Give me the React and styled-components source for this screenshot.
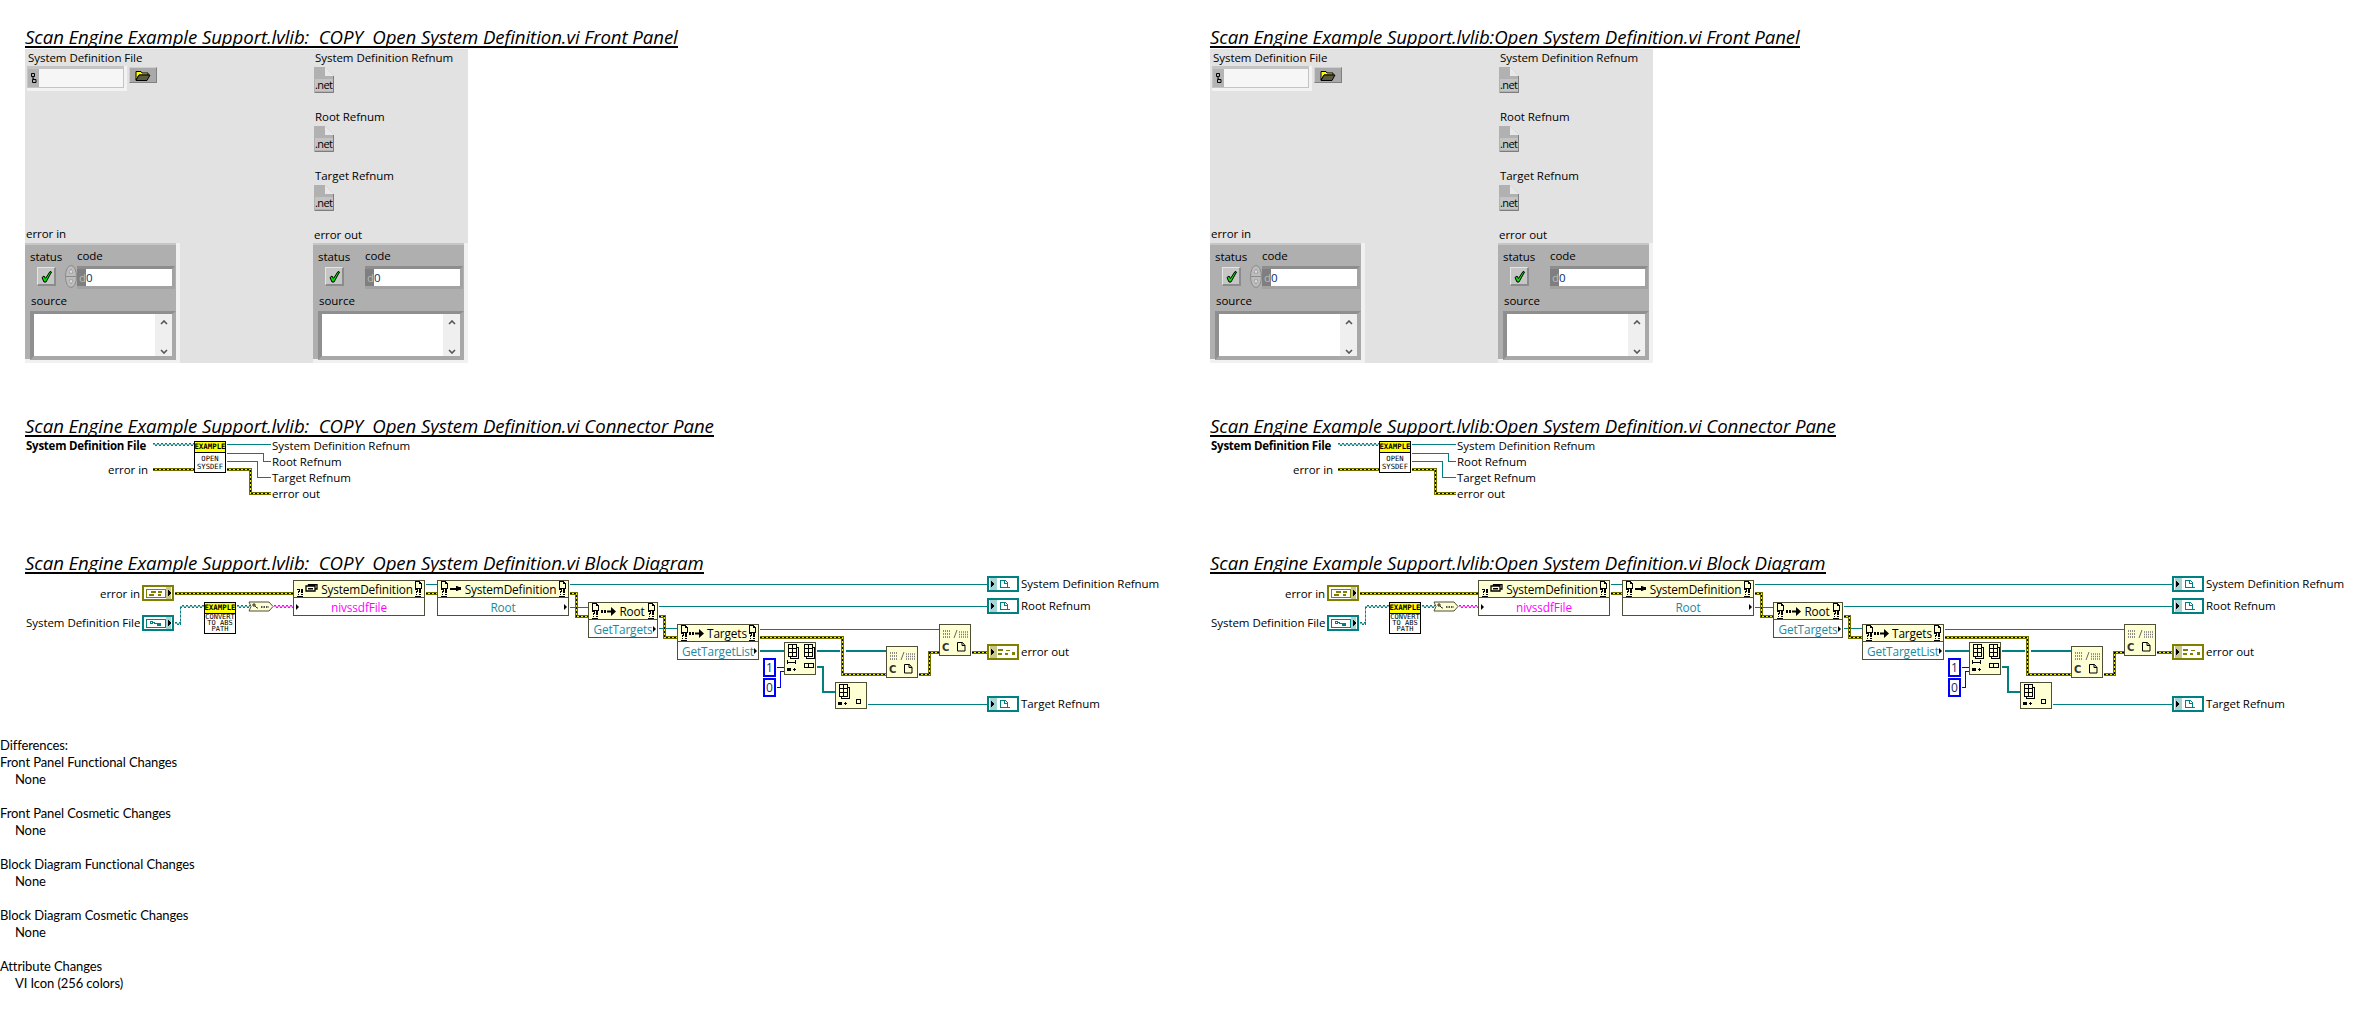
import React from "react";
import styled, { createGlobalStyle, css } from "styled-components";

const Global = createGlobalStyle`
  html, body { margin: 0; padding: 0; background: #fff; }
  body { font-family: "Open Sans", "Noto Sans", sans-serif; color: #000; }
`;

const UI_FONT = `"Open Sans", "Noto Sans", sans-serif`;
const MONO_FONT = `"DejaVu Sans Mono", "Liberation Mono", monospace`;

const placed = css`
  position: absolute;
  left: ${(p) => p.$x ?? 0}px;
  top: ${(p) => p.$y ?? 0}px;
`;

const Page = styled.div`
  width: 2370px;
  height: 1026px;
  overflow: hidden;
`;
const Columns = styled.div`
  display: flex;
  align-items: flex-start;
`;
const Column = styled.section`
  width: 1185px;
  flex: none;
  box-sizing: border-box;
  padding: 28px 0 0 25px;
`;
const Title = styled.h2`
  display: table;
  margin: ${(p) => p.$top ?? 0}px 0 0;
  font: italic 400 18.67px/18px ${UI_FONT};
  letter-spacing: -0.09px;
  white-space: pre;
  border-bottom: 2px solid #000;
`;
const Canvas = styled.div`
  position: relative;
  width: ${(p) => p.$w}px;
  height: ${(p) => p.$h}px;
`;
const Label = styled.span`
  position: absolute;
  top: ${(p) => p.$y}px;
  ${(p) => (p.$r != null ? `right: calc(100% - ${p.$r}px);` : `left: ${p.$x}px;`)}
  font: ${(p) => (p.$bold ? 700 : 400)} 11.5px/16px ${UI_FONT};
  letter-spacing: ${(p) => (p.$bold ? -0.24 : -0.05)}px;
  white-space: nowrap;
`;
const Wires = styled.svg`
  position: absolute;
  left: 0;
  top: 0;
  width: 100%;
  height: 100%;
  pointer-events: none;
`;

/* Front panel */
const Panel = styled.div`
  margin-top: 1px;
  width: 443px;
  height: 314px;
  display: grid;
  grid-template-columns: 155px 155px;
  justify-content: space-between;
  background: #e2e2e2;
`;
const PanelColumn = styled.div`
  display: flex;
  flex-direction: column;
  justify-content: space-between;
`;
const FieldLabel = styled.div`
  font: 400 11.5px/16px ${UI_FONT};
  letter-spacing: -0.05px;
  white-space: nowrap;
  padding-left: ${(p) => p.$pad ?? 0}px;
  margin-bottom: ${(p) => p.$bottom ?? 0}px;
`;
const FileField = styled.div`
  padding-top: 1px;
`;
const FileRow = styled.div`
  display: flex;
  align-items: flex-start;
  gap: 2px;
  padding-left: 2px;
`;
const PathControl = styled.div`
  width: 100px;
  height: 25px;
  box-sizing: border-box;
  display: flex;
  padding: 3px 1px 1px 1px;
  background: #c4c4c4;
  border-right: 3px solid #f2f2f2;
  border-bottom: 3px solid #f2f2f2;
`;
const PathSymbol = styled.div`
  width: 11px;
  background: #b4b4b4;
  display: flex;
  align-items: center;
  justify-content: center;
`;
const PathInput = styled.div`
  flex: 1;
  background: #f6f6f6;
`;
const BrowseButton = styled.div`
  width: 28px;
  height: 16px;
  margin-top: 1px;
  box-sizing: border-box;
  display: flex;
  align-items: center;
  justify-content: center;
  background: #a9a9a9;
  border-top: 1px solid #cfcfcf;
  border-left: 1px solid #cfcfcf;
  border-right: 1px solid #808080;
  border-bottom: 1px solid #808080;
`;
const RefnumList = styled.div`
  display: flex;
  flex-direction: column;
  gap: 16px;
  padding: 1px 0 0 1px;
`;
const RefnumField = styled.div`
  display: flex;
  flex-direction: column;
  align-items: flex-start;
  gap: 1px;
`;
const Refnum = styled.svg`
  display: block;
  width: 20px;
  height: 26px;
`;
const Cluster = styled.div`
  width: 155px;
  height: 120px;
  box-sizing: border-box;
  background: #afafaf;
  border-right: 4px solid #f1f1f1;
  border-bottom: 4px solid #f1f1f1;
  box-shadow: inset 0 2px 0 #c6c6c6;
  display: grid;
  grid-template-columns: 40px 12px 99px;
  grid-template-rows: 22px 24px 22px 1fr;
`;
const StatusLabel = styled(FieldLabel)`
  align-self: end;
  padding-left: 5px;
`;
const CodeLabel = styled(FieldLabel)`
  grid-column: 3;
  margin-top: 5px;
`;
const CheckButton = styled.div`
  grid-column: 1;
  width: 19px;
  height: 19px;
  margin: 2px 0 0 12px;
  box-sizing: border-box;
  display: flex;
  align-items: center;
  justify-content: center;
  background: #c6c6c6;
  border-top: 1px solid #e4e4e4;
  border-left: 1px solid #e4e4e4;
  border-right: 2px solid #8c8c8c;
  border-bottom: 2px solid #8c8c8c;
`;
const Spinner = styled.svg`
  grid-column: 2;
  display: block;
  width: 12px;
  height: 23px;
`;
const Numeric = styled.div`
  grid-column: 3;
  width: 98px;
  height: 23px;
  margin-top: 1px;
  box-sizing: border-box;
  display: flex;
  background: #c0c0c0;
  border-top: 3px solid #8d8d8d;
  border-bottom: 3px solid #a2a2a2;
  border-right: 3px solid #a2a2a2;
`;
const Radix = styled.span`
  width: 9px;
  background: #7f7f7f;
  color: #b9b9b9;
  font: 400 11.5px/17px ${UI_FONT};
  text-align: right;
`;
const NumValue = styled.span`
  flex: 1;
  background: #fff;
  color: #00306a;
  font: 400 11.5px/17px ${UI_FONT};
`;
const SourceLabel = styled(FieldLabel)`
  grid-column: 1 / 4;
  padding-left: 6px;
  margin-top: 4px;
`;
const SourceBox = styled.div`
  grid-column: 1 / 4;
  width: 146px;
  height: 49px;
  margin-left: 5px;
  box-sizing: border-box;
  display: flex;
  justify-content: flex-end;
  background: #fff;
  border-style: solid;
  border-width: 3px 4px 4px 4px;
  border-color: #8f8f8f #a8a8a8 #a8a8a8 #8f8f8f;
`;
const ScrollRail = styled.div`
  width: 17px;
  background: #efefef;
  display: flex;
  flex-direction: column;
  justify-content: space-between;
  align-items: center;
  padding: 6px 0 2px;
  box-sizing: border-box;
`;

/* Diagram */
const ViIcon = styled.div`
  ${placed};
  width: 32px;
  height: 32px;
  box-sizing: border-box;
  border: 1px solid #000;
  background: #fff;
  display: flex;
  flex-direction: column;
  text-align: center;
  overflow: hidden;
`;
const ViBanner = styled.div`
  height: 10px;
  flex: none;
  background: #ffff00;
  border-bottom: 1px solid #000;
  font: 700 7.4px/10px ${MONO_FONT};
  margin: 0 -2px;
`;
const ViText = styled.div`
  font: 400 ${(p) => p.$size ?? 7.2}px/${(p) => p.$lh ?? 8}px ${MONO_FONT};
  margin: ${(p) => p.$mt ?? 2}px -3px 0;
  white-space: pre;
`;
const PropNode = styled.div`
  ${placed};
  width: ${(p) => p.$w}px;
  height: ${(p) => p.$h ?? 36}px;
  box-sizing: border-box;
  border: 1px solid #4f4f38;
  background: #ffffd4;
  display: flex;
  flex-direction: column;
  font: 400 11.8px/16px ${UI_FONT};
  letter-spacing: -0.12px;
`;
const PropHeader = styled.div`
  height: 17px;
  box-sizing: border-box;
  flex: none;
  display: flex;
  align-items: center;
  justify-content: center;
  gap: 3px;
  padding: 0 1px;
  border-bottom: 1px solid #4f4f38;
  position: relative;
  white-space: nowrap;
`;
const PropBody = styled.div`
  flex: 1;
  display: flex;
  align-items: center;
  justify-content: center;
  background: #fff;
  color: ${(p) => p.$color};
  position: relative;
  white-space: nowrap;
`;
const HeaderGlyphs = styled.svg`
  position: absolute;
  top: 0;
  ${(p) => (p.$side === "left" ? "left: 2px;" : "right: 2px;")}
  width: 8px;
  height: 17px;
`;
const BodyArrow = styled.i`
  position: absolute;
  top: 6px;
  ${(p) => (p.$side === "left" ? "left: 2px;" : "right: 1px;")}
  width: 0;
  height: 0;
  border-left: 3px solid #000;
  border-top: 3px solid transparent;
  border-bottom: 3px solid transparent;
`;
const Prim = styled.svg`
  ${placed};
  width: ${(p) => p.$w}px;
  height: ${(p) => p.$h}px;
`;
const NumConst = styled.div`
  ${placed};
  width: 13px;
  height: 19px;
  box-sizing: border-box;
  border: 2px solid #0000ff;
  background: #fff;
  color: #1a2a6a;
  font: 400 12px/15px ${UI_FONT};
  text-align: center;
`;

/* Notes */
const Notes = styled.div`
  font: 400 13px/17px "Lato", "Open Sans", sans-serif;
`;
const NoteLine = styled.div`
  min-height: 17px;
  padding-left: ${(p) => (p.$indent ? 15 : 0)}px;
  letter-spacing: -0.1px;
`;

const TEAL = "#008080";
const Wire = ({ pts, kind = "ref" }) => {
  const points = pts.map((p) => p.join(",")).join(" ");
  const common = { points, fill: "none" };
  if (kind === "err") {
    return (
      <g>
        <polyline {...common} stroke="#707000" strokeWidth="3" />
        <polyline {...common} stroke="#f0f000" strokeWidth="1" />
        <polyline {...common} stroke="#000" strokeWidth="1" strokeDasharray="2 2" />
      </g>
    );
  }
  if (kind === "path" || kind === "str") {
    const c = kind === "path" ? TEAL : "#ff00ff";
    return (
      <g>
        <polyline {...common} stroke={c} strokeWidth="1" strokeOpacity="0.55" />
        <g transform="translate(0,-1)">
          <polyline {...common} stroke={c} strokeWidth="1" strokeDasharray="2 2" />
        </g>
        <g transform="translate(0,1)">
          <polyline {...common} stroke={c} strokeWidth="1" strokeDasharray="2 2" strokeDashoffset="2" />
        </g>
      </g>
    );
  }
  if (kind === "arr") return <polyline {...common} stroke={TEAL} strokeWidth="2" />;
  if (kind === "int") return <polyline {...common} stroke="#0000ff" strokeWidth="1" />;
  return <polyline {...common} stroke={TEAL} strokeWidth="1" />;
};

const Folder = () => (
  <svg width="16" height="11" viewBox="0 0 16 11">
    <path d="M1 1.500h5l1 1.500h6v2H4L1 10z" fill="#ffff00" stroke="#000" />
    <path d="M1 10.500 4 5h11l-3 5.500z" fill="#5a5a40" stroke="#000" />
  </svg>
);
const PathGlyph = () => (
  <svg width="7" height="12" viewBox="0 0 7 12">
    <path d="M1.500 1.500h3v3h-3zM3 4.500v2.500h1M2.500 7.500h3.500v3h-3.500z" fill="none" stroke="#000" />
  </svg>
);
const Check = () => (
  <svg width="13" height="13" viewBox="0 0 13 13">
    <path d="M2 7.500 4 6l1.500 2.500L10 1.500l1.500.5L6 12H4z" fill="#00e000" stroke="#000" strokeWidth="1" />
  </svg>
);
const Chevron = ({ down }) => (
  <svg width="8" height="5" viewBox="0 0 8 5">
    <path d={down ? "M1 1l3 3 3-3" : "M1 4l3-3 3 3"} fill="none" stroke="#555" strokeWidth="1.600" />
  </svg>
);
const NetIcon = () => (
  <Refnum viewBox="0 0 20 26">
    <path d="M0 0h11l9 9v17H0z" fill="#b1b1b1" />
    <path d="M11 0l9 9h-9z" fill="#e8e8e8" />
    <path d="M1 25.500h18.500V9" fill="none" stroke="#7d7d7d" />
    <rect x="1" y="12" width="18" height="12" fill="#c4c4c4" />
    <text x="1" y="22" fontFamily="Open Sans" fontSize="11" letterSpacing="-0.6" fill="#000">.net</text>
  </Refnum>
);

const ErrorCluster = ({ spinner }) => (
  <Cluster>
    <StatusLabel>status</StatusLabel>
    <CodeLabel>code</CodeLabel>
    <CheckButton><Check /></CheckButton>
    {spinner && (
      <Spinner viewBox="0 0 12 23">
        <ellipse cx="6" cy="11.500" rx="5.500" ry="11" fill="#bdbdbd" stroke="#8a8a8a" />
        <path d="M1 11.500h10" stroke="#8a8a8a" />
        <path d="M6 4 4 8h4zM6 19l-2-4h4z" fill="#eee" stroke="#777" strokeWidth=".5" />
      </Spinner>
    )}
    <Numeric>
      <Radix>d</Radix>
      <NumValue>0</NumValue>
    </Numeric>
    <SourceLabel>source</SourceLabel>
    <SourceBox>
      <ScrollRail>
        <Chevron />
        <Chevron down />
      </ScrollRail>
    </SourceBox>
  </Cluster>
);

const FrontPanel = () => (
  <Panel>
    <PanelColumn>
      <FileField>
        <FieldLabel $pad={3}>System Definition File</FieldLabel>
        <FileRow>
          <PathControl>
            <PathSymbol><PathGlyph /></PathSymbol>
            <PathInput />
          </PathControl>
          <BrowseButton><Folder /></BrowseButton>
        </FileRow>
      </FileField>
      <div>
        <FieldLabel $pad={1} $bottom={1}>error in</FieldLabel>
        <ErrorCluster spinner />
      </div>
    </PanelColumn>
    <PanelColumn>
      <RefnumList>
        {["System Definition Refnum", "Root Refnum", "Target Refnum"].map((t) => (
          <RefnumField key={t}>
            <FieldLabel $pad={1}>{t}</FieldLabel>
            <NetIcon />
          </RefnumField>
        ))}
      </RefnumList>
      <div>
        <FieldLabel $pad={1}>error out</FieldLabel>
        <ErrorCluster />
      </div>
    </PanelColumn>
  </Panel>
);

const ConnectorPane = () => (
  <Canvas $w={400} $h={68}>
    <Wires>
      <g transform="translate(.5,.5)" shapeRendering="crispEdges">
        <Wire kind="path" pts={[[127, 7], [169, 7]]} />
        <Wire pts={[[201, 7], [245, 7]]} />
        <Wire pts={[[201, 16], [238, 16], [238, 24], [245, 24]]} />
        <Wire pts={[[201, 24], [232, 24], [232, 40], [245, 40]]} />
        <Wire kind="err" pts={[[127, 32], [169, 32]]} />
        <Wire kind="err" pts={[[201, 32], [225, 32], [225, 56], [245, 56]]} />
      </g>
    </Wires>
    <Label $x={1} $y={1} $bold>System Definition File</Label>
    <Label $r={123} $y={25}>error in</Label>
    <ViIcon $x={169} $y={4}>
      <ViBanner>EXAMPLE</ViBanner>
      <ViText $mt={2}>{"OPEN\nSYSDEF"}</ViText>
    </ViIcon>
    <Label $x={247} $y={1}>System Definition Refnum</Label>
    <Label $x={247} $y={17}>Root Refnum</Label>
    <Label $x={247} $y={33}>Target Refnum</Label>
    <Label $x={247} $y={49}>error out</Label>
  </Canvas>
);

const Terminal = ({ x, y, color, control, glyph }) => {
  const pale = color === TEAL ? "#a6d3d3" : "#c8c88c";
  return (
    <Prim $x={x} $y={y} $w={32} $h={16} viewBox="0 0 32 16" shapeRendering="crispEdges">
      <rect x="1" y="1" width="30" height="14" fill="#fff" stroke={color} strokeWidth="2" />
      {control ? (
        <>
          <rect x="24" y="2" width="5" height="12" fill={pale} />
          <path d="M26 4.500l4 3.500-4 3.500z" fill="#000" />
        </>
      ) : (
        <>
          <rect x="3" y="2" width="7" height="12" fill={pale} />
          <path d="M4 4.500l4 3.500-4 3.500z" fill="#000" />
        </>
      )}
      {glyph === "file" && (
        <>
          <rect x="4" y="4" width="19" height="8" fill="none" stroke={color} />
          <path d="M8 6h2v2H8zM10 7l5 2h3M15 8h3v2h-3z" fill="none" stroke={color} />
        </>
      )}
      {glyph === "ref" && <path d="M13 4h5l2 2v5h-7zM17 4v3h3M13 11h10" fill="none" stroke={color} />}
      {glyph === "errIn" && (
        <>
          <rect x="4" y="4" width="19" height="8" fill="none" stroke={color} />
          <path d="M7 9h5v2H7zM9 6h5v2H9zM16 6h4v2h-4zM16 9h3v2h-3z" fill={color} />
        </>
      )}
      {glyph === "errOut" && <path d="M11 5h5v2h-5zM11 9h4v2h-4zM19 6h4v1h-4zM18 9h3v2h-3zM25 8h3v3h-3z" fill={color} />}
    </Prim>
  );
};

const Doc = ({ x = 0, y = 0 }) => (
  <path transform={`translate(${x},${y})`} d="M.5.500h3.500l2 2v4.500H.500zM4 .5v2h2" fill="none" stroke="#000" />
);
const ErrMark = ({ x = 0, y = 0 }) => (
  <g transform={`translate(${x},${y})`}>
    <path d="M0 0h3v3H2v1H1V2h1V1H0zM1 5h1v1H1zM4 0h1.500v4H4zM4 5h1.500v1H4z" />
    <path d="M0 7.500h6" stroke="#000" />
  </g>
);
const Corner = ({ side, doc = true }) => (
  <HeaderGlyphs $side={side} viewBox="0 0 8 17" shapeRendering="crispEdges">
    {doc && <Doc x={1} y={0} />}
    <ErrMark x={1} y={8} />
  </HeaderGlyphs>
);
const ClassIcon = () => (
  <svg width="13" height="10" viewBox="0 0 13 10">
    <path d="M1 2h9v5H1zM3.500 2V.5H12V5h-2" fill="none" stroke="#000" strokeWidth="1.300" />
    <rect x="3" y="4" width="5" height="1.500" />
  </svg>
);
const KeyIcon = () => (
  <svg width="12" height="8" viewBox="0 0 12 8">
    <path d="M0 3h6V1h1l2 1h2v3H9L7 6H6V5H0z" />
  </svg>
);
const CallIcon = () => (
  <svg width="15" height="9" viewBox="0 0 15 9">
    <path d="M0 3h2v3H0zM3 3h2v3H3zM6 3.500h4V0l5 4.500L10 9V5.500H6z" />
  </svg>
);
const StackedGrid = ({ x, y }) => (
  <g transform={`translate(${x},${y})`} fill="none" stroke="#000">
    <path d="M2.500.5h8v12h-8zM2.500 4.500h8M2.500 8.500h8M6.500.5v12" />
    <path d="M10.500 3.500h2v11h-8v-2" />
  </g>
);
const PrimBox = ({ w, h }) => (
  <rect x=".5" y=".5" width={w - 1} height={h - 1} fill="#ffffd4" stroke="#4f4f38" strokeWidth="1" />
);

const BlockDiagram = () => (
  <Canvas $w={1160} $h={163}>
    <Wires>
      <g transform="translate(.5,.5)" shapeRendering="crispEdges">
        <Wire kind="path" pts={[[149, 49], [155, 49], [155, 32], [179, 32]]} />
        <Wire kind="path" pts={[[211, 32], [224, 32]]} />
        <Wire kind="str" pts={[[248, 32], [268, 32]]} />
        <Wire pts={[[400, 10], [412, 10]]} />
        <Wire pts={[[544, 10], [962, 10]]} />
        <Wire pts={[[544, 33], [563, 33]]} />
        <Wire pts={[[633, 32], [962, 32]]} />
        <Wire pts={[[633, 54], [652, 54]]} />
        <Wire pts={[[734, 55], [914, 55]]} />
        <Wire kind="arr" pts={[[734, 76], [759, 76]]} />
        <Wire kind="arr" pts={[[791, 76], [814, 76]]} />
        <Wire kind="arr" pts={[[820, 76], [861, 76]]} />
        <Wire kind="arr" pts={[[791, 92], [797, 92], [797, 117], [810, 117]]} />
        <Wire pts={[[842, 130], [962, 130]]} />
        <Wire kind="int" pts={[[751, 93], [759, 93]]} />
        <Wire kind="int" pts={[[751, 113], [755, 113], [755, 97], [759, 97]]} />
        <Wire kind="err" pts={[[149, 19], [268, 19]]} />
        <Wire kind="err" pts={[[400, 19], [412, 19]]} />
        <Wire kind="err" pts={[[544, 19], [551, 19], [551, 42], [563, 42]]} />
        <Wire kind="err" pts={[[633, 42], [639, 42], [639, 63], [652, 63]]} />
        <Wire kind="err" pts={[[734, 63], [817, 63], [817, 100], [861, 100]]} />
        <Wire kind="err" pts={[[893, 100], [904, 100], [904, 78], [914, 78]]} />
        <Wire kind="err" pts={[[946, 78], [962, 78]]} />
      </g>
    </Wires>

    <Label $r={115} $y={12}>error in</Label>
    <Terminal x={117} y={11} color="#808000" control glyph="errIn" />
    <Label $x={1} $y={41}>System Definition File</Label>
    <Terminal x={117} y={41} color={TEAL} control glyph="file" />

    <ViIcon $x={179} $y={28}>
      <ViBanner>EXAMPLE</ViBanner>
      <ViText $mt={0} $size={7} $lh={6}>{"CONVERT\nTO ABS\nPATH"}</ViText>
    </ViIcon>
    <Prim $x={223} $y={27} $w={26} $h={11} viewBox="0 0 26 11">
      <path d="M1 1h20l4 4.500-4 4.500H1l2-4.500z" fill="#ffffd4" stroke="#4f4f38" />
      <path d="M5 3h2v2H5zM7 5l2 2h1" fill="none" stroke="#000" strokeWidth=".8" />
      <path d="M13 6h8" stroke="#555" strokeDasharray="1.500 1" strokeWidth="2" />
    </Prim>

    <PropNode $x={268} $y={6} $w={132}>
      <PropHeader>
        <Corner side="left" doc={false} />
        <ClassIcon />
        <span>SystemDefinition</span>
        <Corner side="right" />
      </PropHeader>
      <PropBody $color="#ff00ff">
        <BodyArrow $side="left" />
        nivssdfFile
      </PropBody>
    </PropNode>

    <PropNode $x={412} $y={6} $w={132}>
      <PropHeader>
        <Corner side="left" />
        <KeyIcon />
        <span>SystemDefinition</span>
        <Corner side="right" />
      </PropHeader>
      <PropBody $color="#1b8aa0">
        Root
        <BodyArrow $side="right" />
      </PropBody>
    </PropNode>

    <PropNode $x={563} $y={28} $w={70}>
      <PropHeader>
        <Corner side="left" />
        <CallIcon />
        <span>Root</span>
        <Corner side="right" />
      </PropHeader>
      <PropBody $color="#1b8aa0">
        GetTargets
        <BodyArrow $side="right" />
      </PropBody>
    </PropNode>

    <PropNode $x={652} $y={50} $w={82}>
      <PropHeader>
        <Corner side="left" />
        <CallIcon />
        <span>Targets</span>
        <Corner side="right" />
      </PropHeader>
      <PropBody $color="#1b8aa0">
        GetTargetList
        <BodyArrow $side="right" />
      </PropBody>
    </PropNode>

    <NumConst $x={738} $y={84}>1</NumConst>
    <NumConst $x={738} $y={104}>0</NumConst>

    <Prim $x={759} $y={68} $w={32} $h={33} viewBox="0 0 32 33" shapeRendering="crispEdges">
      <PrimBox w={32} h={33} />
      <StackedGrid x={2} y={2} />
      <StackedGrid x={18} y={2} />
      <path d="M3 20h9M3.500 18v4M11.500 18v4M6 20h3" stroke="#000" fill="none" />
      <rect x="3" y="26" width="4" height="3" />
      <path d="M9 27h3M10.500 25.500v3" stroke="#000" />
      <path d="M20 21.500h9v4h-9zM24.500 21.500v4" fill="none" stroke="#000" />
    </Prim>

    <Prim $x={810} $y={108} $w={32} $h={27} viewBox="0 0 32 27" shapeRendering="crispEdges">
      <PrimBox w={32} h={27} />
      <StackedGrid x={2} y={2} />
      <rect x="3" y="20" width="4" height="3" />
      <path d="M9 21h3M10.500 19.500v3" stroke="#000" />
      <rect x="21.500" y="17.500" width="4" height="4" fill="none" stroke="#000" />
    </Prim>

    {[[861, 72], [914, 50]].map(([x, y]) => (
      <Prim key={x} $x={x} $y={y} $w={32} $h={32} viewBox="0 0 32 32">
        <PrimBox w={32} h={32} />
        <path d="M4 7h8M4 10h8M4 13h8" stroke="#666" strokeDasharray="1 1" strokeWidth="1.500" />
        <path d="M15 14l3-8" stroke="#666" />
        <path d="M20 8h9M20 10.500h9M20 13h9" stroke="#777" strokeDasharray="1 1" strokeWidth="1.500" />
        <text x="3" y="27" fontFamily="DejaVu Sans" fontWeight="700" fontSize="10" fill="#333">C</text>
        <path d="M18.500 18.500h5l2.500 3v5.500h-7.500zM23 18.500v3h3" fill="none" stroke="#000" />
      </Prim>
    ))}

    <Terminal x={962} y={2} color={TEAL} glyph="ref" />
    <Label $x={996} $y={2}>System Definition Refnum</Label>
    <Terminal x={962} y={24} color={TEAL} glyph="ref" />
    <Label $x={996} $y={24}>Root Refnum</Label>
    <Terminal x={962} y={70} color="#808000" glyph="errOut" />
    <Label $x={996} $y={70}>error out</Label>
    <Terminal x={962} y={122} color={TEAL} glyph="ref" />
    <Label $x={996} $y={122}>Target Refnum</Label>
  </Canvas>
);

const ViReport = ({ name }) => (
  <Column>
    <Title>{name} Front Panel</Title>
    <FrontPanel />
    <Title $top={54}>{name} Connector Pane</Title>
    <ConnectorPane />
    <Title $top={49}>{name} Block Diagram</Title>
    <BlockDiagram />
  </Column>
);

const notes = [
  ["Differences:"],
  ["Front Panel Functional Changes"],
  ["None", 1],
  [""],
  ["Front Panel Cosmetic Changes"],
  ["None", 1],
  [""],
  ["Block Diagram Functional Changes"],
  ["None", 1],
  [""],
  ["Block Diagram Cosmetic Changes"],
  ["None", 1],
  [""],
  ["Attribute Changes"],
  ["VI Icon (256 colors)", 1],
];

export default function App() {
  return (
    <Page>
      <Global />
      <Columns>
        <ViReport name="Scan Engine Example Support.lvlib:  COPY  Open System Definition.vi" />
        <ViReport name="Scan Engine Example Support.lvlib:Open System Definition.vi" />
      </Columns>
      <Notes>
        {notes.map(([text, indent], i) => (
          <NoteLine key={i} $indent={indent}>{text}</NoteLine>
        ))}
      </Notes>
    </Page>
  );
}
